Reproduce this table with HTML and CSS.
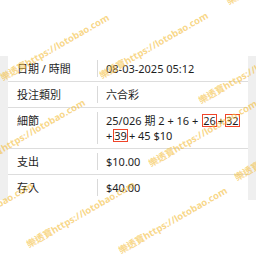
FILE: index.html
```html
<!DOCTYPE html>
<html lang="zh-Hant">
<head>
<meta charset="utf-8">
<link rel="stylesheet" href="styles.css">
</head>
<body>
<div class="panel">
  <div class="table">
    <div class="row"><div class="label">日期 / 時間</div><div class="divider"></div><div class="value">08-03-2025 05:12</div></div>
    <div class="row"><div class="label">投注類別</div><div class="divider"></div><div class="value">六合彩</div></div>
    <div class="row"><div class="label">細節</div><div class="divider"></div><div class="value">25/026 期 2 + 16 + <span class="hit">26</span>+<span class="hit">32</span> +<span class="hit">39</span>+ 45 $10</div></div>
    <div class="row"><div class="label">支出</div><div class="divider"></div><div class="value">$10.00</div></div>
    <div class="row last"><div class="label">存入</div><div class="divider"></div><div class="value">$40.00</div></div>
  </div>
</div>
<div class="marks">
  <span class="wm w1">樂透寶https://lotobao.com</span>
  <span class="wm w2">樂透寶https://lotobao.com</span>
  <span class="wm w3">樂透寶https://lotobao.com</span>
  <span class="wm w4">樂透寶https://lotobao.com</span>
  <span class="wm w5">樂透寶https://lotobao.com</span>
  <span class="wm w6">樂透寶https://lotobao.com</span>
  <span class="wm w7">樂透寶https://lotobao.com</span>
  <span class="wm w8">樂透寶https://lotobao.com</span>
  <span class="wm w9">樂透寶https://lotobao.com</span>
  <span class="wm w10">樂透寶https://lotobao.com</span>
</div>
</body>
</html>
```
FILE: styles.css
```css
html, body {
  margin: 0;
  padding: 0;
  background: #ffffff;
}
body {
  position: relative;
  width: 256px;
  height: 256px;
  overflow: hidden;
  font-family: "Noto Sans", "Noto Sans CJK TC", sans-serif;
  font-size: 11px;
  color: #1e1e1e;
}
.panel {
  margin-top: 56px;
  background: #efefef;
  padding: 0 8px;
}
.table {
  background: #ffffff;
}
.row {
  display: grid;
  grid-template-columns: 89px 1px 1fr;
  border-bottom: 1px solid #dddddd;
  line-height: 15px;
}
.row.last {
  border-bottom: none;
}
.label {
  padding: 5px 9px;
}
.divider {
  background: #d9d9d9;
  margin: 4px 0;
}
.value {
  padding: 5px 4px 5px 8px;
}
.hit {
  display: inline-block;
  border: 1px solid #f0452a;
  line-height: 11px;
  margin: 0 1px;
  padding: 0;
}
.marks {
  position: absolute;
  inset: 0;
  pointer-events: none;
}
.wm {
  position: absolute;
  white-space: nowrap;
  font-family: "Noto Sans", "Noto Sans CJK TC", sans-serif;
  font-weight: bold;
  font-size: 9.5px;
  line-height: 10px;
  color: rgba(244, 190, 60, 0.62);
  transform-origin: 0 100%;
  transform: rotate(-30deg);
}
.w1 { left: 4px; top: 73px; }
.w2 { left: 103px; top: 71px; }
.w3 { left: 202px; top: 96px; }
.w4 { left: -20px; top: 158px; }
.w5 { left: 152px; top: 159px; }
.w6 { left: 238px; top: 173px; }
.w7 { left: 30px; top: 240px; }
.w8 { left: 122px; top: 246px; }
.w9 { left: -72px; top: 241px; }
.w10 { left: 230px; top: -3px; }
```
